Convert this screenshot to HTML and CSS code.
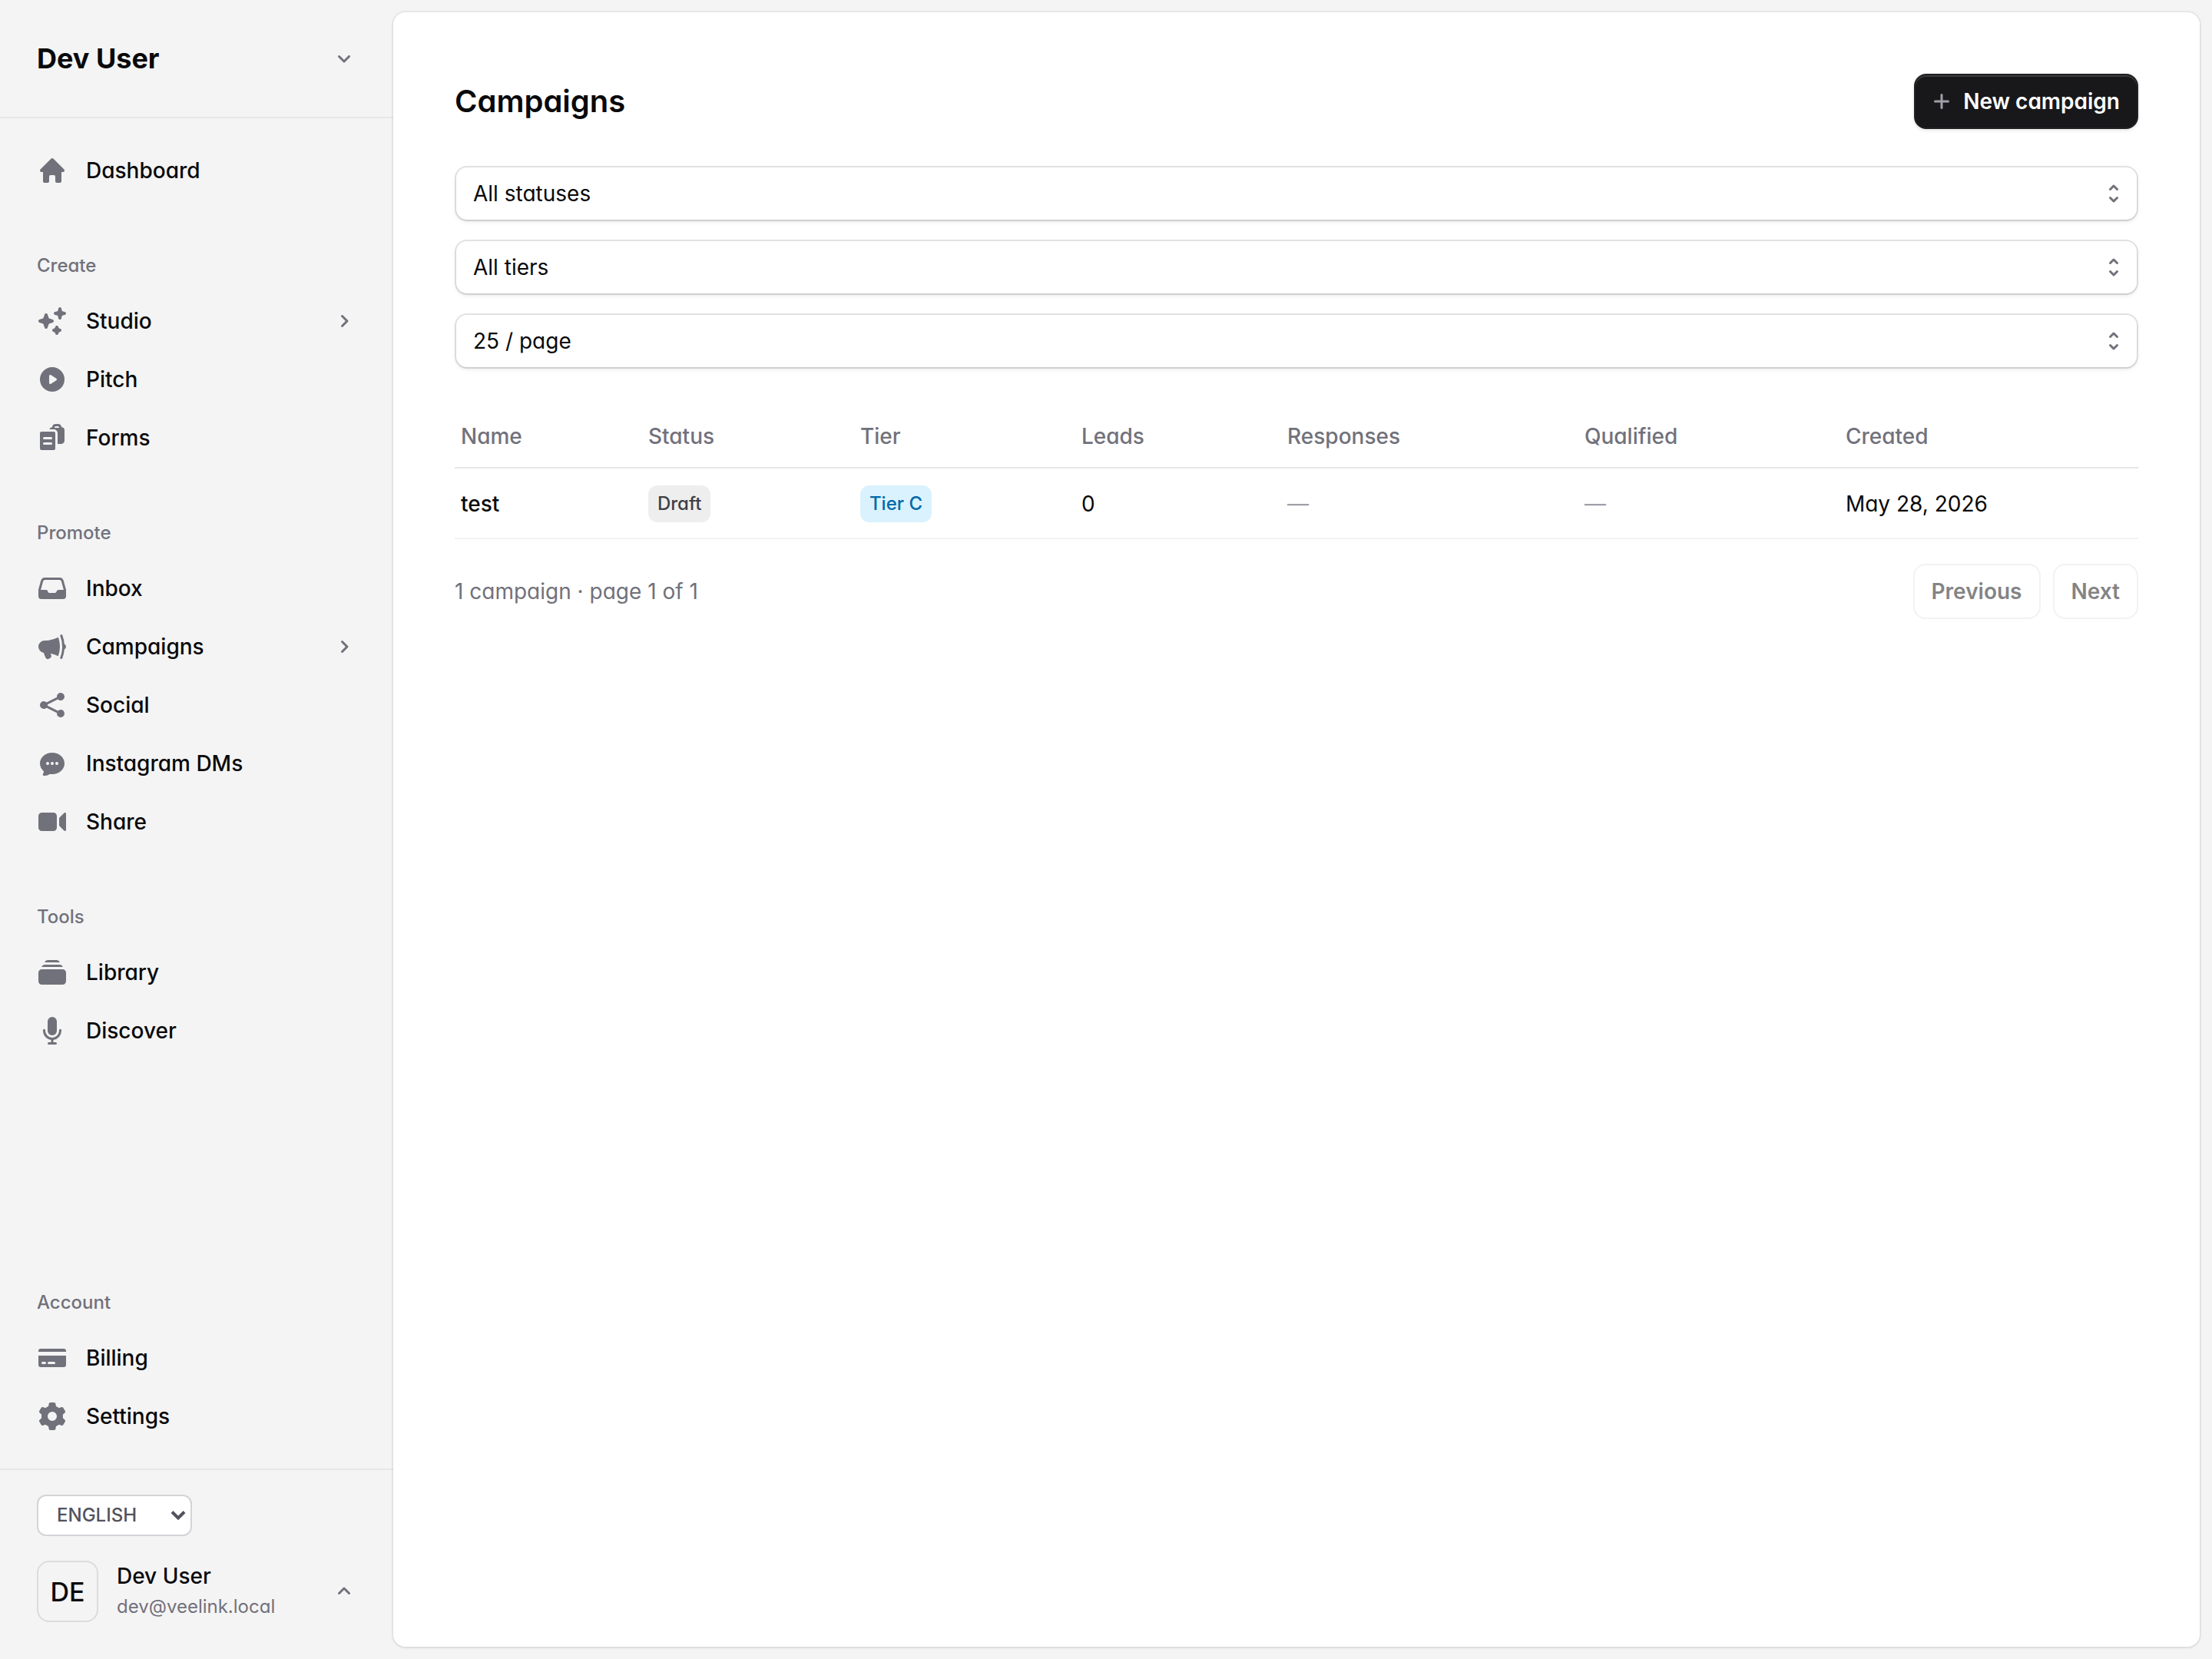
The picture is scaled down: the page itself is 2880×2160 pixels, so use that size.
FILE: index.html
```html
<!DOCTYPE html>
<html lang="en">
<head>
<meta charset="utf-8">
<meta name="viewport" content="width=device-width, initial-scale=1">
<title>Campaigns</title>
<link rel="stylesheet" href="styles.css">
</head>
<body>
<div class="app">
  <aside class="sidebar">
    <header class="sidebar-header">
      <button type="button" class="switcher">
        <span class="switcher-name">Dev User</span>
        <svg class="icon-sm" viewBox="0 0 16 16" aria-hidden="true"><path fill-rule="evenodd" d="M4.22 6.22a.75.75 0 0 1 1.06 0L8 8.94l2.72-2.72a.75.75 0 1 1 1.06 1.06l-3.25 3.25a.75.75 0 0 1-1.06 0L4.22 7.28a.75.75 0 0 1 0-1.06Z"/></svg>
      </button>
    </header>

    <nav class="sidebar-body" aria-label="Main">
      <div class="nav-section">
        <a class="nav-item" href="#">
          <svg class="icon" viewBox="0 0 20 20" aria-hidden="true"><path fill-rule="evenodd" d="M9.293 2.293a1 1 0 0 1 1.414 0l7 7A1 1 0 0 1 17 11h-1v6a1 1 0 0 1-1 1h-2a1 1 0 0 1-1-1v-3a1 1 0 0 0-1-1H9a1 1 0 0 0-1 1v3a1 1 0 0 1-1 1H5a1 1 0 0 1-1-1v-6H3a1 1 0 0 1-.707-1.707l7-7Z"/></svg>
          <span class="nav-label">Dashboard</span>
        </a>
      </div>

      <div class="nav-section">
        <h2 class="nav-heading">Create</h2>
        <a class="nav-item" href="#">
          <svg class="icon" viewBox="0 0 20 20" aria-hidden="true"><path d="M15.98 1.804a1 1 0 0 0-1.96 0l-.24 1.192a1 1 0 0 1-.784.785l-1.192.238a1 1 0 0 0 0 1.962l1.192.238a1 1 0 0 1 .785.785l.238 1.192a1 1 0 0 0 1.962 0l.238-1.192a1 1 0 0 1 .785-.785l1.192-.238a1 1 0 0 0 0-1.962l-1.192-.238a1 1 0 0 1-.785-.785l-.238-1.192ZM6.949 5.684a1 1 0 0 0-1.898 0l-.683 2.051a1 1 0 0 1-.633.633l-2.051.683a1 1 0 0 0 0 1.898l2.051.684a1 1 0 0 1 .633.632l.683 2.051a1 1 0 0 0 1.898 0l.683-2.051a1 1 0 0 1 .633-.633l2.051-.683a1 1 0 0 0 0-1.898l-2.051-.683a1 1 0 0 1-.633-.633L6.95 5.684ZM13.949 13.684a1 1 0 0 0-1.898 0l-.184.551a1 1 0 0 1-.632.633l-.551.183a1 1 0 0 0 0 1.898l.551.183a1 1 0 0 1 .633.633l.183.551a1 1 0 0 0 1.898 0l.184-.551a1 1 0 0 1 .632-.633l.551-.183a1 1 0 0 0 0-1.898l-.551-.184a1 1 0 0 1-.633-.632l-.183-.551Z"/></svg>
          <span class="nav-label">Studio</span>
          <svg class="icon-sm" viewBox="0 0 16 16" aria-hidden="true"><path fill-rule="evenodd" d="M6.22 4.22a.75.75 0 0 1 1.06 0l3.25 3.25a.75.75 0 0 1 0 1.06l-3.25 3.25a.75.75 0 0 1-1.06-1.06L8.94 8 6.22 5.28a.75.75 0 0 1 0-1.06Z"/></svg>
        </a>
        <a class="nav-item" href="#">
          <svg class="icon" viewBox="0 0 20 20" aria-hidden="true"><path fill-rule="evenodd" d="M2 10a8 8 0 1 1 16 0 8 8 0 0 1-16 0Zm6.39-2.908a.75.75 0 0 1 .766.027l3.5 2.25a.75.75 0 0 1 0 1.262l-3.5 2.25A.75.75 0 0 1 8 12.25v-4.5a.75.75 0 0 1 .39-.658Z"/></svg>
          <span class="nav-label">Pitch</span>
        </a>
        <a class="nav-item" href="#">
          <svg class="icon" viewBox="0 0 20 20" aria-hidden="true"><path fill-rule="evenodd" d="M15.988 3.012A2.25 2.25 0 0 1 18 5.25v6.5A2.25 2.25 0 0 1 15.75 14H13.5V7A2.5 2.5 0 0 0 11 4.5H8.128a2.252 2.252 0 0 1 1.884-1.488A2.25 2.25 0 0 1 12.25 1h1.5a2.25 2.25 0 0 1 2.238 2.012ZM11.5 3.25a.75.75 0 0 1 .75-.75h1.5a.75.75 0 0 1 .75.75v.25h-3v-.25Z"/><path fill-rule="evenodd" d="M2 7a1 1 0 0 1 1-1h8a1 1 0 0 1 1 1v10a1 1 0 0 1-1 1H3a1 1 0 0 1-1-1V7Zm2 3.25a.75.75 0 0 1 .75-.75h4.5a.75.75 0 0 1 0 1.5h-4.5a.75.75 0 0 1-.75-.75Zm0 3.5a.75.75 0 0 1 .75-.75h4.5a.75.75 0 0 1 0 1.5h-4.5a.75.75 0 0 1-.75-.75Z"/></svg>
          <span class="nav-label">Forms</span>
        </a>
      </div>

      <div class="nav-section">
        <h2 class="nav-heading">Promote</h2>
        <a class="nav-item" href="#">
          <svg class="icon" viewBox="0 0 20 20" aria-hidden="true"><path fill-rule="evenodd" d="M1 11.27c0-.246.033-.492.099-.73l1.523-5.521A2.75 2.75 0 0 1 5.273 3h9.454a2.75 2.75 0 0 1 2.651 2.019l1.523 5.52c.066.239.099.485.099.732V15a2 2 0 0 1-2 2H3a2 2 0 0 1-2-2v-3.73Zm3.068-5.852A1.25 1.25 0 0 1 5.273 4.5h9.454a1.25 1.25 0 0 1 1.205.918l1.523 5.52c.006.02.01.041.015.062H14a1 1 0 0 0-.86.49l-.606 1.02a1 1 0 0 1-.86.49H8.236a1 1 0 0 1-.894-.553l-.448-.894A1 1 0 0 0 6 11H2.53l.015-.062 1.523-5.52Z"/></svg>
          <span class="nav-label">Inbox</span>
        </a>
        <a class="nav-item" href="#" aria-current="page">
          <svg class="icon" viewBox="0 0 20 20" aria-hidden="true"><path d="M13.92 3.845a19.362 19.362 0 0 1-6.3 1.98C6.765 5.942 5.89 6 5 6a4 4 0 0 0-.504 7.969 15.97 15.97 0 0 0 1.271 3.34c.397.771 1.342 1 2.05.59l.867-.5c.726-.419.94-1.32.588-2.02-.166-.331-.315-.666-.448-1.004 1.8.357 3.511.963 5.096 1.78A17.964 17.964 0 0 0 15 10c0-2.162-.381-4.235-1.08-6.155ZM15.243 3.097A19.456 19.456 0 0 1 16.5 10c0 2.43-.445 4.758-1.257 6.904l-.03.077a.75.75 0 0 0 1.401.537 20.903 20.903 0 0 0 1.312-5.745 2 2 0 0 0 0-3.546 20.902 20.902 0 0 0-1.312-5.745.75.75 0 0 0-1.4.537l.029.078Z"/></svg>
          <span class="nav-label">Campaigns</span>
          <svg class="icon-sm" viewBox="0 0 16 16" aria-hidden="true"><path fill-rule="evenodd" d="M6.22 4.22a.75.75 0 0 1 1.06 0l3.25 3.25a.75.75 0 0 1 0 1.06l-3.25 3.25a.75.75 0 0 1-1.06-1.06L8.94 8 6.22 5.28a.75.75 0 0 1 0-1.06Z"/></svg>
        </a>
        <a class="nav-item" href="#">
          <svg class="icon" viewBox="0 0 20 20" aria-hidden="true"><path d="M13 4.5a2.5 2.5 0 1 1 .702 1.737L6.97 9.604a2.518 2.518 0 0 1 0 .792l6.733 3.367a2.5 2.5 0 1 1-.671 1.341l-6.733-3.367a2.5 2.5 0 1 1 0-3.475l6.733-3.366A2.52 2.52 0 0 1 13 4.5Z"/></svg>
          <span class="nav-label">Social</span>
        </a>
        <a class="nav-item" href="#">
          <svg class="icon" viewBox="0 0 20 20" aria-hidden="true"><path fill-rule="evenodd" d="M10 3c4.31 0 8 3.033 8 7s-3.69 7-8 7a9.165 9.165 0 0 1-1.504-.123 5.976 5.976 0 0 1-3.935 1.107.75.75 0 0 1-.584-1.143 3.478 3.478 0 0 0 .522-1.756C2.979 13.825 2 12.025 2 10c0-3.967 3.69-7 8-7Zm0 8a1 1 0 1 0 0-2 1 1 0 0 0 0 2Zm-2-1a1 1 0 1 1-2 0 1 1 0 0 1 2 0Zm5 1a1 1 0 1 0 0-2 1 1 0 0 0 0 2Z"/></svg>
          <span class="nav-label">Instagram DMs</span>
        </a>
        <a class="nav-item" href="#">
          <svg class="icon" viewBox="0 0 20 20" aria-hidden="true"><path d="M3.25 4A2.25 2.25 0 0 0 1 6.25v7.5A2.25 2.25 0 0 0 3.25 16h7.5A2.25 2.25 0 0 0 13 13.75v-7.5A2.25 2.25 0 0 0 10.75 4h-7.5ZM19 4.75a.75.75 0 0 0-1.28-.53l-3 3a.75.75 0 0 0-.22.53v4.5c0 .199.079.39.22.53l3 3a.75.75 0 0 0 1.28-.53V4.75Z"/></svg>
          <span class="nav-label">Share</span>
        </a>
      </div>

      <div class="nav-section">
        <h2 class="nav-heading">Tools</h2>
        <a class="nav-item" href="#">
          <svg class="icon" viewBox="0 0 20 20" aria-hidden="true"><path d="M5.127 3.502 5.25 3.5h9.5c.041 0 .082 0 .123.002A2.251 2.251 0 0 0 12.75 2h-5.5a2.25 2.25 0 0 0-2.123 1.502ZM1 10.25A2.25 2.25 0 0 1 3.25 8h13.5A2.25 2.25 0 0 1 19 10.25v5.5A2.25 2.25 0 0 1 16.75 18H3.25A2.25 2.25 0 0 1 1 15.75v-5.5ZM3.25 6.5c-.04 0-.082 0-.123.002A2.25 2.25 0 0 1 5.25 5h9.5c.98 0 1.814.627 2.123 1.502a3.819 3.819 0 0 0-.123-.002H3.25Z"/></svg>
          <span class="nav-label">Library</span>
        </a>
        <a class="nav-item" href="#">
          <svg class="icon" viewBox="0 0 20 20" aria-hidden="true"><path d="M7 4a3 3 0 0 1 6 0v6a3 3 0 1 1-6 0V4Z"/><path d="M5.5 9.643a.75.75 0 0 0-1.5 0V10c0 3.06 2.29 5.585 5.25 5.954V17.5h-1.5a.75.75 0 0 0 0 1.5h4.5a.75.75 0 0 0 0-1.5h-1.5v-1.546A6.001 6.001 0 0 0 16 10v-.357a.75.75 0 0 0-1.5 0V10a4.5 4.5 0 0 1-9 0v-.357Z"/></svg>
          <span class="nav-label">Discover</span>
        </a>
      </div>

      <div class="nav-section nav-section-end">
        <h2 class="nav-heading">Account</h2>
        <a class="nav-item" href="#">
          <svg class="icon" viewBox="0 0 20 20" aria-hidden="true"><path fill-rule="evenodd" d="M2.5 4A1.5 1.5 0 0 0 1 5.5V6h18v-.5A1.5 1.5 0 0 0 17.5 4h-15ZM19 8.5H1v6A1.5 1.5 0 0 0 2.5 16h15a1.5 1.5 0 0 0 1.5-1.5v-6ZM3 13.25a.75.75 0 0 1 .75-.75h1.5a.75.75 0 0 1 0 1.5h-1.5a.75.75 0 0 1-.75-.75Zm4.75-.75a.75.75 0 0 0 0 1.5h3.5a.75.75 0 0 0 0-1.5h-3.5Z"/></svg>
          <span class="nav-label">Billing</span>
        </a>
        <a class="nav-item" href="#">
          <svg class="icon" viewBox="0 0 20 20" aria-hidden="true"><path fill-rule="evenodd" d="M7.84 1.804A1 1 0 0 1 8.82 1h2.36a1 1 0 0 1 .98.804l.331 1.652a6.993 6.993 0 0 1 1.929 1.115l1.598-.54a1 1 0 0 1 1.186.447l1.18 2.044a1 1 0 0 1-.205 1.251l-1.267 1.113a7.047 7.047 0 0 1 0 2.228l1.267 1.113a1 1 0 0 1 .206 1.25l-1.18 2.045a1 1 0 0 1-1.187.447l-1.598-.54a6.993 6.993 0 0 1-1.929 1.115l-.33 1.652a1 1 0 0 1-.98.804H8.82a1 1 0 0 1-.98-.804l-.331-1.652a6.993 6.993 0 0 1-1.929-1.115l-1.598.54a1 1 0 0 1-1.186-.447l-1.18-2.044a1 1 0 0 1 .205-1.251l1.267-1.114a7.05 7.05 0 0 1 0-2.227L1.821 7.773a1 1 0 0 1-.206-1.25l1.18-2.045a1 1 0 0 1 1.187-.447l1.598.54A6.992 6.992 0 0 1 7.51 3.456l.33-1.652ZM10 13a3 3 0 1 0 0-6 3 3 0 0 0 0 6Z"/></svg>
          <span class="nav-label">Settings</span>
        </a>
      </div>
    </nav>

    <footer class="sidebar-footer">
      <div class="language">
        <select class="language-select" aria-label="Language">
          <option>ENGLISH</option>
        </select>
        <svg class="language-arrow" viewBox="0 0 20 14" aria-hidden="true"><path d="M2 2.5 10 10.5 18 2.5"/></svg>
      </div>
      <button type="button" class="account">
        <span class="avatar">DE</span>
        <span class="account-text">
          <span class="account-name">Dev User</span>
          <span class="account-email">dev@veelink.local</span>
        </span>
        <svg class="icon-sm" viewBox="0 0 16 16" aria-hidden="true"><path fill-rule="evenodd" d="M11.78 9.78a.75.75 0 0 1-1.06 0L8 7.06 5.28 9.78a.75.75 0 0 1-1.06-1.06l3.25-3.25a.75.75 0 0 1 1.06 0l3.25 3.25a.75.75 0 0 1 0 1.06Z"/></svg>
      </button>
    </footer>
  </aside>

  <main class="panel">
    <div class="page-head">
      <h1 class="page-title">Campaigns</h1>
      <button type="button" class="btn btn-dark">
        <svg class="btn-icon" viewBox="0 0 16 16" aria-hidden="true"><path d="M8.75 3.75a.75.75 0 0 0-1.5 0v3.5h-3.5a.75.75 0 0 0 0 1.5h3.5v3.5a.75.75 0 0 0 1.5 0v-3.5h3.5a.75.75 0 0 0 0-1.5h-3.5v-3.5Z"/></svg>
        New campaign
      </button>
    </div>

    <div class="filters">
      <div class="select-box">
        <select class="select" aria-label="Status"><option>All statuses</option></select>
        <svg class="select-arrows" viewBox="0 0 16 16" aria-hidden="true"><path d="M5.75 10.75 8 13l2.25-2.25M10.25 5.25 8 3 5.75 5.25"/></svg>
      </div>
      <div class="select-box">
        <select class="select" aria-label="Tier"><option>All tiers</option></select>
        <svg class="select-arrows" viewBox="0 0 16 16" aria-hidden="true"><path d="M5.75 10.75 8 13l2.25-2.25M10.25 5.25 8 3 5.75 5.25"/></svg>
      </div>
      <div class="select-box">
        <select class="select" aria-label="Rows per page"><option>25 / page</option></select>
        <svg class="select-arrows" viewBox="0 0 16 16" aria-hidden="true"><path d="M5.75 10.75 8 13l2.25-2.25M10.25 5.25 8 3 5.75 5.25"/></svg>
      </div>
    </div>

    <table class="table">
      <colgroup>
        <col class="col-name"><col class="col-status"><col class="col-tier"><col class="col-leads"><col class="col-responses"><col class="col-qualified"><col>
      </colgroup>
      <thead>
        <tr><th scope="col">Name</th><th scope="col">Status</th><th scope="col">Tier</th><th scope="col">Leads</th><th scope="col">Responses</th><th scope="col">Qualified</th><th scope="col">Created</th></tr>
      </thead>
      <tbody>
        <tr>
          <td class="cell-name">test</td>
          <td><span class="badge badge-zinc">Draft</span></td>
          <td><span class="badge badge-sky">Tier C</span></td>
          <td>0</td>
          <td class="cell-empty">—</td>
          <td class="cell-empty">—</td>
          <td>May 28, 2026</td>
        </tr>
      </tbody>
    </table>

    <div class="pager">
      <p class="pager-text">1 campaign · page 1 of 1</p>
      <div class="pager-buttons">
        <button type="button" class="btn btn-outline" disabled>Previous</button>
        <button type="button" class="btn btn-outline" disabled>Next</button>
      </div>
    </div>
  </main>
</div>
</body>
</html>
```
FILE: styles.css
```css
:root {
  --ink: #09090b;
  --muted: #71717b;
  --line: rgba(9, 9, 11, 0.05);
  --line-strong: rgba(9, 9, 11, 0.1);
  --canvas: #f4f4f4;
}

*,
*::before,
*::after {
  box-sizing: border-box;
}

body {
  margin: 0;
  background: var(--canvas);
  color: var(--ink);
  font-family: Inter, "Liberation Sans", sans-serif;
  font-size: 28px;
  line-height: 40px;
  font-feature-settings: "cv11";
}

h1,
h2,
p {
  margin: 0;
}

button,
select {
  margin: 0;
  font: inherit;
  font-feature-settings: inherit;
  color: inherit;
  cursor: pointer;
}

.app {
  display: grid;
  grid-template-columns: 512px minmax(0, 1fr);
  min-height: 100vh;
}

/* Sidebar */

.sidebar {
  display: flex;
  flex-direction: column;
}

.sidebar-header {
  padding: 32px;
  border-bottom: 2px solid var(--line);
}

.switcher,
.account {
  display: flex;
  align-items: center;
  gap: 24px;
  width: 100%;
  padding: 16px;
  border: 0;
  background: none;
  text-align: left;
}

.switcher-name {
  flex: 1;
  font-size: 36px;
  line-height: 56px;
  font-weight: 700;
}

.icon {
  flex: none;
  width: 40px;
  height: 40px;
  fill: var(--muted);
}

.icon-sm {
  flex: none;
  width: 32px;
  height: 32px;
  fill: var(--muted);
}

.sidebar-body {
  display: flex;
  flex: 1;
  flex-direction: column;
  gap: 64px;
  padding: 32px;
}

.nav-section {
  display: flex;
  flex-direction: column;
  gap: 4px;
}

.nav-section-end {
  margin-top: auto;
}

.nav-heading {
  margin-bottom: 8px;
  padding: 0 16px;
  color: var(--muted);
  font-size: 24px;
  line-height: 48px;
  font-weight: 500;
}

.nav-item {
  display: flex;
  align-items: center;
  gap: 24px;
  padding: 16px;
  color: inherit;
  font-weight: 500;
  text-decoration: none;
}

.nav-label {
  flex: 1;
}

.sidebar-footer {
  display: flex;
  flex-direction: column;
  gap: 16px;
  padding: 32px;
  border-top: 2px solid var(--line);
}

.language {
  position: relative;
  width: 202px;
  margin-left: 16px;
}

.language-select {
  display: block;
  width: 100%;
  height: 54px;
  padding: 0 24px;
  border: 2px solid #d4d4d8;
  border-radius: 12px;
  appearance: none;
  background: #fff;
  color: #52525c;
  font-size: 24px;
  font-weight: 500;
}

.language-arrow {
  position: absolute;
  top: 20px;
  right: 8px;
  width: 20px;
  height: 14px;
  fill: none;
  stroke: #52525c;
  stroke-width: 4;
  pointer-events: none;
}

.avatar {
  display: grid;
  place-items: center;
  flex: none;
  width: 80px;
  height: 80px;
  padding-top: 2px;
  border: 2px solid var(--line-strong);
  border-radius: 16px;
  font-size: 34px;
  font-weight: 500;
}

.account-text {
  display: flex;
  flex: 1;
  flex-direction: column;
}

.account-name {
  font-weight: 500;
}

.account-email {
  color: var(--muted);
  font-size: 24px;
}

/* Main panel */

.panel {
  margin: 16px 16px 16px 0;
  padding: 80px;
  border-radius: 16px;
  background: #fff;
  box-shadow: 0 0 0 2px var(--line), 0 2px 4px rgba(0, 0, 0, 0.05);
}

.page-head {
  display: flex;
  align-items: center;
  justify-content: space-between;
}

.page-title {
  font-size: 40px;
  line-height: 64px;
  font-weight: 600;
}

.btn {
  display: inline-flex;
  align-items: center;
  gap: 12px;
  padding: 14px 22px;
  border: 2px solid transparent;
  border-radius: 16px;
  font-weight: 600;
}

.btn-dark {
  padding-left: 18px;
  border-color: #212123;
  background: #18181b;
  box-shadow: inset 0 2px rgba(255, 255, 255, 0.15), 0 2px 4px rgba(0, 0, 0, 0.1);
  color: #fff;
}

.btn-icon {
  width: 32px;
  height: 32px;
  fill: #9f9fa9;
}

.btn-outline {
  border-color: var(--line-strong);
  background: none;
  opacity: 0.5;
  cursor: default;
}

.filters {
  display: flex;
  flex-direction: column;
  gap: 24px;
  margin-top: 48px;
}

.select-box {
  position: relative;
}

.select-box::before {
  content: "";
  position: absolute;
  inset: 2px;
  border-radius: 14px;
  background: #fff;
  box-shadow: 0 2px 6px rgba(0, 0, 0, 0.1), 0 2px 4px -2px rgba(0, 0, 0, 0.1);
}

.select {
  display: block;
  position: relative;
  width: 100%;
  padding: 14px 70px 14px 22px;
  border: 2px solid var(--line-strong);
  border-radius: 16px;
  appearance: none;
  background: none;
}

.select-arrows {
  position: absolute;
  top: 20px;
  right: 16px;
  width: 32px;
  height: 32px;
  fill: none;
  stroke: var(--muted);
  stroke-width: 1.5;
  stroke-linecap: round;
  stroke-linejoin: round;
  pointer-events: none;
}

/* Table */

.table {
  width: 100%;
  margin-top: 48px;
  border-spacing: 0;
  table-layout: fixed;
  text-align: left;
}

.col-name { width: 11.13%; }
.col-status { width: 12.59%; }
.col-tier { width: 13.14%; }
.col-leads { width: 12.23%; }
.col-responses { width: 17.65%; }
.col-qualified { width: 15.51%; }

.table th {
  padding: 20px 8px;
  border-bottom: 2px solid var(--line-strong);
  color: var(--muted);
  font-weight: 500;
}

.table td {
  padding: 22px 8px 20px;
  border-bottom: 2px solid var(--line);
}

.cell-name {
  font-weight: 500;
}

.table .cell-empty {
  color: #9f9fa9;
}

.badge {
  display: block;
  width: fit-content;
  padding: 4px 12px;
  border-radius: 12px;
  font-size: 24px;
  font-weight: 500;
}

.badge-zinc {
  background: #eeeeee;
  color: #3f3f46;
}

.badge-sky {
  background: #d9f2fd;
  color: #0069a8;
}

.pager {
  display: flex;
  align-items: center;
  justify-content: space-between;
  margin-top: 32px;
}

.pager-text {
  color: var(--muted);
}

.pager-buttons {
  display: flex;
  gap: 16px;
}
```
